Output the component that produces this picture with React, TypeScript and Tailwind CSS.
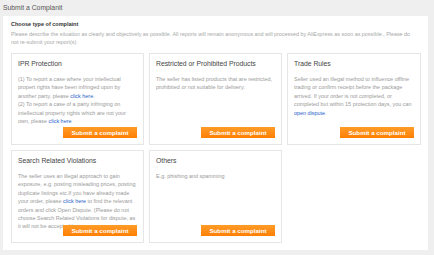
import React from "react";

const Link = ({ children }: { children: React.ReactNode }) => (
  <span className="text-[#1f5fc8]">{children}</span>
);

const Button = () => (
  <div className="absolute right-[6px] bottom-[6px] flex h-[11px] w-[74px] items-center justify-center bg-gradient-to-b from-[#ff9c26] to-[#ff7f00] text-[6.2px] font-bold text-white">
    Submit a complaint
  </div>
);

const Card = ({
  title,
  children,
  empty,
}: {
  title?: string;
  children?: React.ReactNode;
  empty?: boolean;
}) => {
  if (empty) return <div />;
  return (
    <div className="relative overflow-hidden border border-[#e6e6e6] bg-white pl-[6px] pr-[4px] pt-[5px]">
      <div className="whitespace-nowrap text-[6.8px] leading-[10px] text-[#444]">{title}</div>
      <div className="mt-[6px] whitespace-nowrap text-[5.45px] leading-[8.4px] text-[#9a9a9a]">
        {children}
      </div>
      <Button />
    </div>
  );
};

export default function App() {
  return (
    <div
      className="h-[255px] w-[434px] overflow-hidden bg-[#efefef]"
      style={{ fontFamily: '"Liberation Sans", Arial, sans-serif' }}
    >
      <div className="flex h-[16px] items-center pl-[3px] text-[6.8px] text-[#555]">
        Submit a Complanit
      </div>
      <div className="ml-[3px] mr-[6px] bg-white px-[8px] pb-[7px] pt-[5px]">
        <div className="text-[5.5px] font-bold leading-[7px] text-[#333]">
          Choose type of complaint
        </div>
        <div className="mt-[2px] text-[5.4px] leading-[8px] text-[#a8a8a8]">
          <span className="whitespace-nowrap">
            Please describe the situation as clearly and objectively as possible. All reports will
            remain anonymous and will processed by AliExpress as soon as possible., Please do
          </span>
          <br />
          not re-submit your report(s).
        </div>
        <div className="mt-[7px] grid grid-cols-[133px_133px_134px] grid-rows-[92px_93px] gap-[5px]">
          <Card title="IPR Protection">
            (1) To report a case where your intellectual
            <br />
            propert rights have been infringed upon by
            <br />
            another party, please <Link>click here</Link>.
            <br />
            (2) To report a case of a party infringing on
            <br />
            intellectual property rights which are not your
            <br />
            own, please <Link>click here</Link>
          </Card>
          <Card title="Restricted or Prohibited Products">
            The seller has listed products that are restricted,
            <br />
            prohibited or not suitable for delivery.
          </Card>
          <Card title="Trade Rules">
            Seller used an illegal method to influence offline
            <br />
            trading or confirm receipt before the package
            <br />
            arrived. If your order is not completed, or
            <br />
            completed but within 15 protection days, you can
            <br />
            <Link>open dispute</Link>.
          </Card>
          <Card title="Search Related Violations">
            The seller uses an illegal approach to gain
            <br />
            exposure, e.g. posting misleading prices, posting
            <br />
            duplicate listings etc.If you have already made
            <br />
            your order, please <Link>click here</Link> to find the relevant
            <br />
            orders and click Open Dispute. (Please do not
            <br />
            choose Search Related Violations for dispute, as
            <br />
            it will not be accepted.)
          </Card>
          <Card title="Others">E.g. phishing and spamming</Card>
          <Card empty />
        </div>
      </div>
    </div>
  );
}
